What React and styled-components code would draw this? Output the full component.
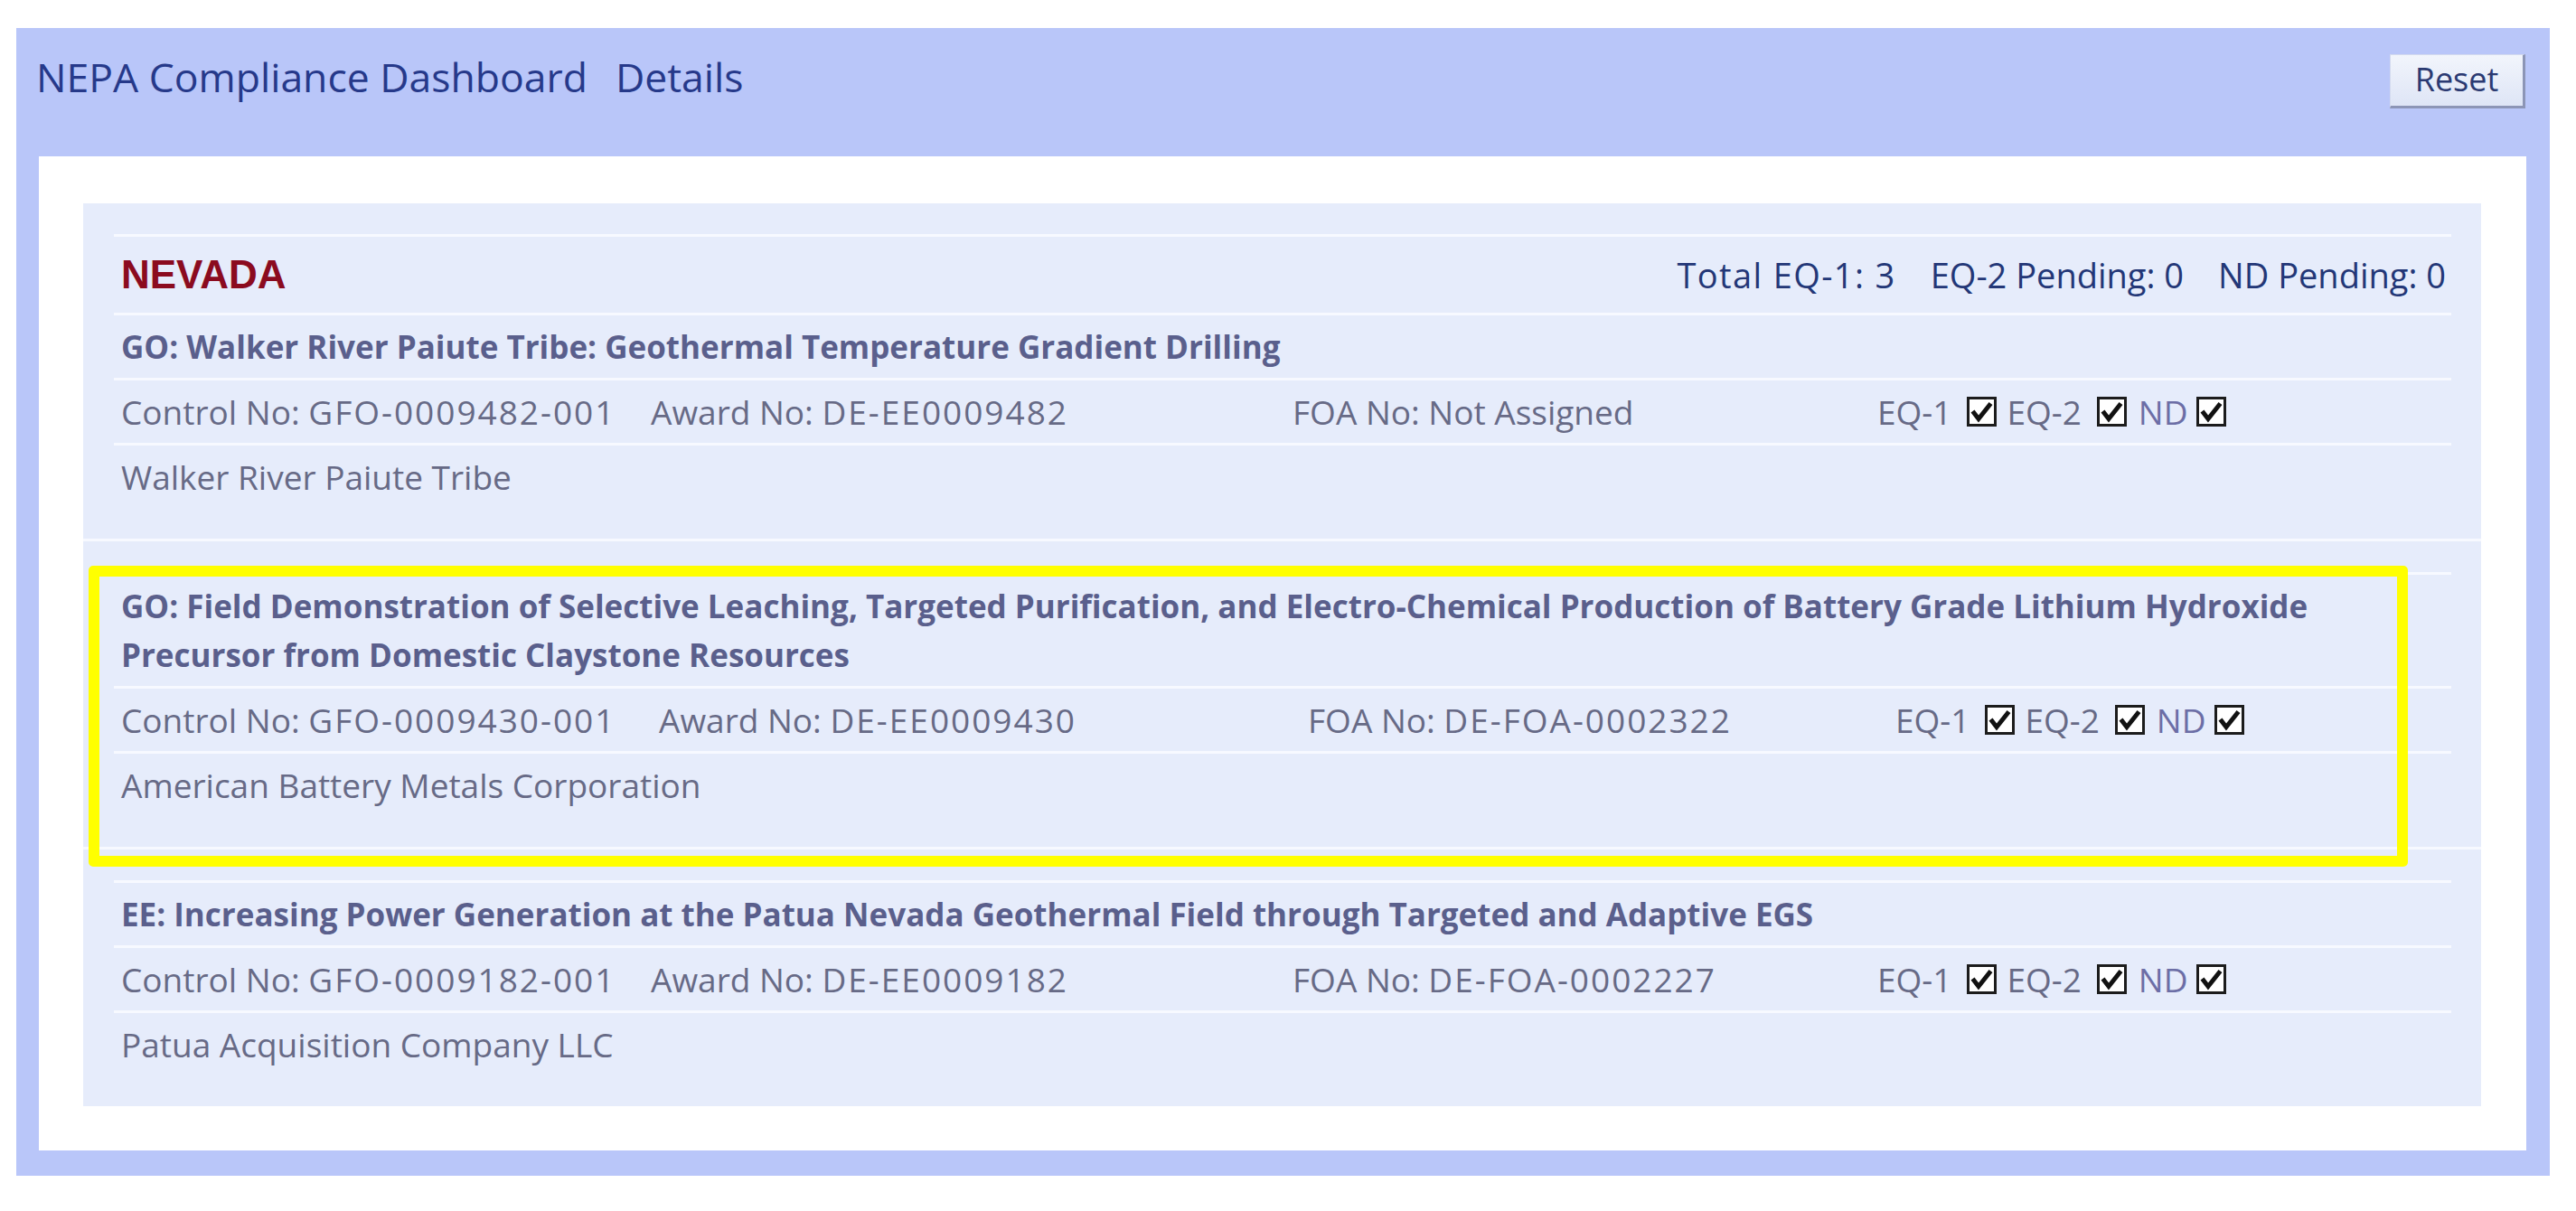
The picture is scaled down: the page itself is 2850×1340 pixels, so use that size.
import React from "react";
import styled, { createGlobalStyle } from "styled-components";

const projects = [
  {
    id: 1,
    title: "GO: Walker River Paiute Tribe: Geothermal Temperature Gradient Drilling",
    control: "GFO-0009482-001",
    award: "DE-EE0009482",
    foa: "Not Assigned",
    org: "Walker River Paiute Tribe",
    cols: "586px 710px 647px 1fr",
  },
  {
    id: 2,
    title:
      "GO: Field Demonstration of Selective Leaching, Targeted Purification, and Electro-Chemical Production of Battery Grade Lithium Hydroxide Precursor from Domestic Claystone Resources",
    control: "GFO-0009430-001",
    award: "DE-EE0009430",
    foa: "DE-FOA-0002322",
    org: "American Battery Metals Corporation",
    cols: "595px 718px 650px 1fr",
    highlight: true,
  },
  {
    id: 3,
    title:
      "EE: Increasing Power Generation at the Patua Nevada Geothermal Field through Targeted and Adaptive EGS",
    control: "GFO-0009182-001",
    award: "DE-EE0009182",
    foa: "DE-FOA-0002227",
    org: "Patua Acquisition Company LLC",
    cols: "586px 710px 647px 1fr",
  },
];

const CheckBox = () => (
  <svg width="33" height="33" viewBox="0 0 33 33">
    <rect x="1.5" y="1.5" width="30" height="30" fill="#fff" stroke="#1c1c1c" strokeWidth="3" />
    <path d="M6.5 16 L13 24.5 L26.5 7.5" fill="none" stroke="#111" strokeWidth="5" strokeLinejoin="miter" />
  </svg>
);

const App = () => {
  return (
    <Page>
      <GlobalStyle />
      <Panel>
        <Header>
          <Title>
            NEPA Compliance Dashboard<Crumb>Details</Crumb>
          </Title>
          <ResetButton type="button">Reset</ResetButton>
        </Header>
        <Card>
          <List>
            {projects.map((p, i) => (
              <Item key={p.id}>
                <Table>
                  {i === 0 && (
                    <StateRow>
                      <StateName>NEVADA</StateName>
                      <Summary>
                        <SummaryItem $wide>Total EQ-1: 3</SummaryItem>
                        <SummaryItem>EQ-2 Pending: 0</SummaryItem>
                        <SummaryItem>ND Pending: 0</SummaryItem>
                      </Summary>
                    </StateRow>
                  )}
                  <Row>
                    <ProjectTitle>{p.title}</ProjectTitle>
                  </Row>
                  <InfoRow $cols={p.cols}>
                    <span>
                      Control No: <Code>{p.control}</Code>
                    </span>
                    <span>
                      Award No: <Code>{p.award}</Code>
                    </span>
                    <span>
                      FOA No: <Code $plain={p.foa === "Not Assigned"}>{p.foa}</Code>
                    </span>
                    <Checks>
                      <CheckLabel>EQ-1</CheckLabel>
                      <CheckBox />
                      <CheckLabel>EQ-2</CheckLabel>
                      <CheckBox />
                      <CheckLabel $nd>ND</CheckLabel>
                      <CheckBox />
                    </Checks>
                  </InfoRow>
                  <Row>
                    <Org>{p.org}</Org>
                  </Row>
                </Table>
                {p.highlight && <Highlight />}
              </Item>
            ))}
          </List>
        </Card>
      </Panel>
    </Page>
  );
};

const GlobalStyle = createGlobalStyle`
  html, body {
    margin: 0;
    padding: 0;
    background: #ffffff;
  }
  body {
    font-family: "Open Sans", "DejaVu Sans", sans-serif;
  }
`;

const Page = styled.div`
  padding: 31px 29px 40px 18px;
`;

const Panel = styled.div`
  background: #b9c6f9;
  padding-bottom: 28px;
`;

const Header = styled.div`
  height: 142px;
  box-sizing: border-box;
  display: flex;
  justify-content: space-between;
  align-items: flex-start;
  padding: 24px 27px 0 22px;
`;

const Title = styled.h1`
  margin: 0;
  font-weight: 400;
  font-size: 44.5px;
  line-height: 60px;
  color: #26398a;
`;

const Crumb = styled.span`
  margin-left: 31px;
`;

const ResetButton = styled.button`
  margin-top: 5px;
  width: 150px;
  height: 60px;
  box-sizing: border-box;
  background: linear-gradient(#f2f5fc, #dee5f6);
  border: 1px solid #d3daef;
  border-right: 3px solid #8c95b6;
  border-bottom: 3px solid #8c95b6;
  font-family: "Open Sans", sans-serif;
  font-size: 36px;
  color: #2b3a72;
  padding: 0 0 3px;
`;

const Card = styled.div`
  background: #ffffff;
  margin: 0 26px 0 25px;
  padding: 52px 50px 49px 49px;
`;

const List = styled.div`
  background: #e6ecfb;
`;

const Item = styled.div`
  position: relative;
  padding: 34px 33px 34px 34px;
  border-bottom: 3px solid #f7f9ff;

  &:last-child {
    border-bottom: none;
  }
`;

const Table = styled.div`
  display: flex;
  flex-direction: column;
`;

const Row = styled.div`
  border-top: 3px solid #f7f9ff;
  padding: 7.5px 8px;
  line-height: 54px;
`;

const StateRow = styled(Row)`
  display: flex;
  justify-content: space-between;
  align-items: center;
  padding: 15px 6px 15px 8px;
`;

const StateName = styled.span`
  font-family: "Liberation Sans", Arial, sans-serif;
  font-weight: 700;
  font-size: 44px;
  color: #8b0b1f;
`;

const Summary = styled.div`
  display: flex;
  gap: 38px;
  font-size: 38px;
  color: #233777;
`;

const SummaryItem = styled.span`
  letter-spacing: ${(p) => (p.$wide ? "1.4px" : "0")};
`;

const ProjectTitle = styled.div`
  font-weight: 700;
  font-size: 35px;
  color: #5a5f8c;
`;

const InfoRow = styled(Row)`
  display: grid;
  grid-template-columns: ${(p) => p.$cols};
  font-size: 37px;
  color: #676a86;
`;

const Code = styled.span`
  letter-spacing: ${(p) => (p.$plain ? "0" : "2px")};
`;

const Checks = styled.div`
  display: flex;
  align-items: center;
`;

const CheckLabel = styled.span`
  margin: 0 ${(p) => (p.$nd ? "9px" : "17px")} 0 ${(p) => (p.$nd ? "13px" : "11px")};
  color: ${(p) => (p.$nd ? "#6c6ea6" : "#676a86")};

  &:first-child {
    margin-left: 0;
  }
`;

const Org = styled.div`
  font-size: 37px;
  color: #676a86;
`;

const Highlight = styled.div`
  position: absolute;
  top: 27px;
  left: 6px;
  right: 81px;
  bottom: -22px;
  border: 12px solid #ffff00;
  border-radius: 5px;
  pointer-events: none;
  z-index: 2;
`;

export default App;
